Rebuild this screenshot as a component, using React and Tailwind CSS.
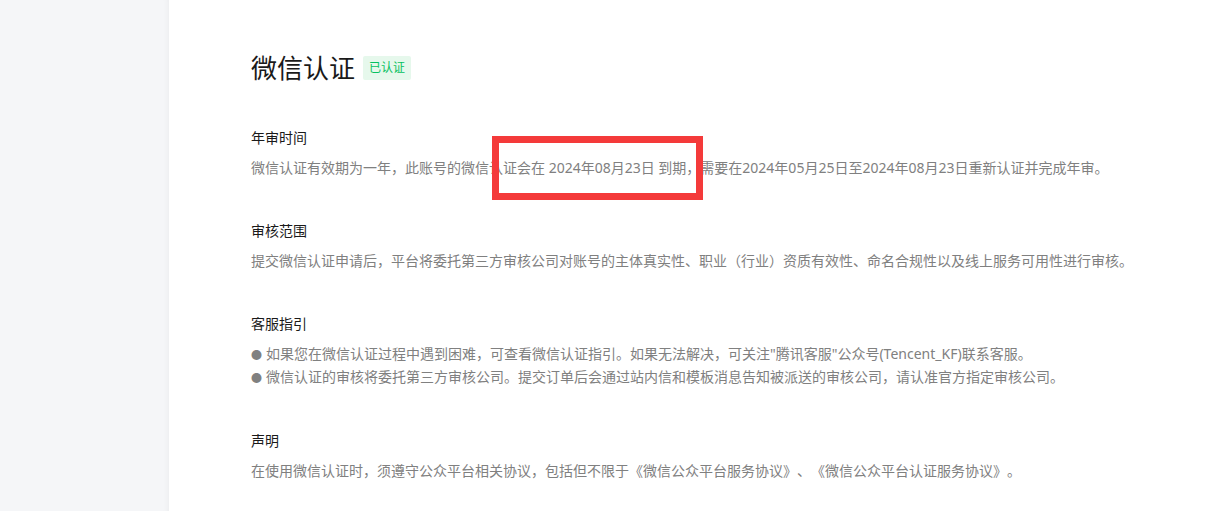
import React from 'react';

const font = { fontFamily: '"Noto Sans", "Noto Sans CJK SC", sans-serif' };

const sections = [
  {
    title: '年审时间',
    lines: ['微信认证有效期为一年，此账号的微信认证会在 2024年08月23日 到期，需要在2024年05月25日至2024年08月23日重新认证并完成年审。'],
  },
  {
    title: '审核范围',
    lines: ['提交微信认证申请后，平台将委托第三方审核公司对账号的主体真实性、职业（行业）资质有效性、命名合规性以及线上服务可用性进行审核。'],
  },
  {
    title: '客服指引',
    bullets: true,
    lines: [
      '如果您在微信认证过程中遇到困难，可查看微信认证指引。如果无法解决，可关注"腾讯客服"公众号(Tencent_KF)联系客服。',
      '微信认证的审核将委托第三方审核公司。提交订单后会通过站内信和模板消息告知被派送的审核公司，请认准官方指定审核公司。',
    ],
  },
  {
    title: '声明',
    lines: ['在使用微信认证时，须遵守公众平台相关协议，包括但不限于《微信公众平台服务协议》、《微信公众平台认证服务协议》。'],
  },
];

export default function App() {
  return (
    <div className="flex w-[1205px] h-[511px] overflow-hidden bg-white [text-spacing-trim:space-all]" style={font}>
      {/* left rail */}
      <div className="w-[169px] shrink-0 bg-[#f5f6f8] shadow-[inset_-5px_0_6px_-5px_rgba(0,0,0,0.06)]" />

      <div className="relative flex-1 pl-[82px] pt-[48px]">
        <div className="flex items-center">
          <h1 className="text-[26px] leading-[40px] font-normal text-[#1a1a1a]">微信认证</h1>
          <span className="ml-[8px] h-[24px] px-[6px] rounded-[2px] bg-[#e6f8ec] text-[#07c160] text-[12px] leading-[24px]">已认证</span>
        </div>

        <div className="mt-[40px] flex flex-col gap-[42px]">
          {sections.map((s) => (
            <div key={s.title}>
              <h2 className="text-[14px] leading-[20px] font-normal text-[#1a1a1a]">{s.title}</h2>
              <div className="mt-[9px] text-[14px] leading-[22px] text-[#808080]">
                {s.lines.map((l) => (
                  <p key={l} className="whitespace-nowrap">
                    {s.bullets && <span className="text-[11px] mr-[4px]">●</span>}
                    {l}
                  </p>
                ))}
              </div>
            </div>
          ))}
        </div>

        {/* annotation box */}
        <div className="absolute left-[323px] top-[136px] w-[211px] h-[64px] border-[7px] border-[#f43a3a]" />
      </div>
    </div>
  );
}
